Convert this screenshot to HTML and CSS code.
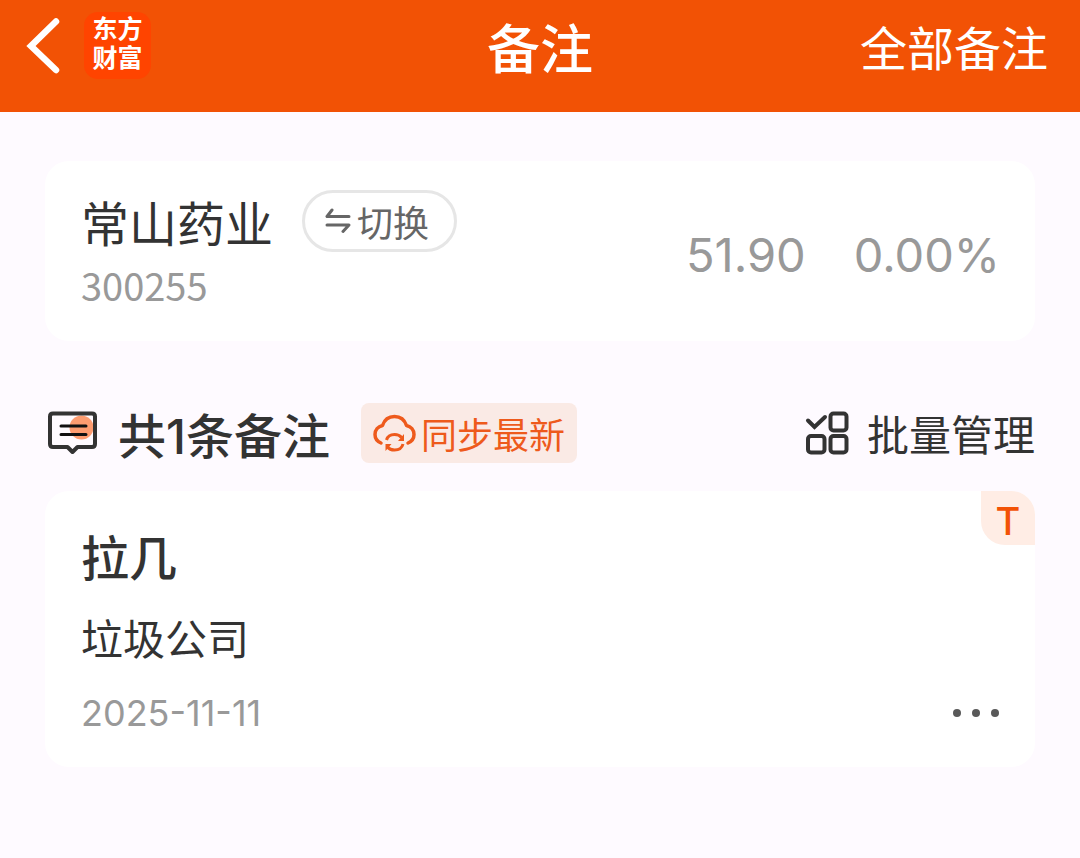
FILE: index.html
```html
<!DOCTYPE html>
<html lang="zh-CN">
<head>
<meta charset="utf-8">
<meta name="viewport" content="width=device-width, initial-scale=1">
<title>备注</title>
<link rel="stylesheet" href="styles.css">
</head>
<body>
<header class="topbar">
  <div class="topbar-left">
    <button class="back" type="button" aria-label="返回">
      <svg width="36" height="56" viewBox="0 0 36 56" fill="none" stroke="#fff" stroke-width="6.500" stroke-linecap="round" stroke-linejoin="miter"><path d="M32 3.500 7 28 32 52"/></svg>
    </button>
    <div class="logo">东方<br>财富</div>
  </div>
  <h1 class="title">备注</h1>
  <a class="all-notes" href="#">全部备注</a>
</header>
<main class="page">
  <section class="card stock">
    <div class="stock-info">
      <div class="stock-head">
        <h2 class="stock-name">常山药业</h2>
        <button class="switch" type="button">
          <svg width="26" height="26" viewBox="0 0 26 26" fill="none" stroke="#666" stroke-width="3" stroke-linecap="round" stroke-linejoin="round"><path d="M7 2 2 8.500H24M2 17H24L18 23.500"/></svg>
          <span>切换</span>
        </button>
      </div>
      <div class="stock-code">300255</div>
    </div>
    <div class="quote"><span>51.90</span><span>0.00%</span></div>
  </section>
  <div class="toolbar">
    <svg class="note-icon" width="50" height="44" viewBox="0 0 50 44" fill="none"><circle cx="33.500" cy="16.500" r="12" fill="#fd9c70"/><path d="M5 2.500H44Q47 2.500 47 5.500V33Q47 36 44 36H29.500L24.500 41 19.500 36H5Q2 36 2 33V5.500Q2 2.500 5 2.500Z" stroke="#333" stroke-width="4" stroke-linejoin="round"/><path d="M13 15H38M13 23.500H38" stroke="#111" stroke-width="3" stroke-linecap="round"/></svg>
    <h2 class="count">共<span class="num">1</span>条备注</h2>
    <button class="sync" type="button">
      <svg width="44" height="40" viewBox="0 0 44 40" fill="none" stroke="#ee5a1c" stroke-width="3.500" stroke-linecap="round" stroke-linejoin="round"><path d="M8 30C4.500 28.500 2 25 2 21.500C2 17 5 13.500 9.500 12.500C11.500 6.500 16 3.500 21.500 3.500S31.500 6.500 33.500 12.500C38 13.500 41 17 41 21.500C41 25 38.500 28.500 35 30"/><path stroke-width="3" stroke-linecap="butt" d="M13.500 27C14.500 23.500 17.500 21.500 21.500 21.500C24.500 21.500 27 22.500 28.500 24.500M30 31C29 35 25.500 37 21.500 37C18.500 37 16 36 14.500 34"/><path fill="#ee5a1c" stroke="none" d="M31 21V28H25ZM12.500 38V31H18.500Z"/></svg>
      <span>同步最新</span>
    </button>
    <button class="manage" type="button">
      <svg width="44" height="44" viewBox="0 0 44 44" fill="none" stroke="#333" stroke-width="4"><rect x="25.500" y="2.500" width="16" height="17" rx="3"/><rect x="3" y="25" width="16.500" height="16.500" rx="3"/><rect x="25.500" y="25" width="16" height="16.500" rx="3"/><path d="M3 9.500 9.500 16 20 6" stroke-linecap="round"/></svg>
      <span>批量管理</span>
    </button>
  </div>
  <article class="card note">
    <span class="tag">T</span>
    <h3 class="note-title">拉几</h3>
    <p class="note-body">垃圾公司</p>
    <div class="note-foot">
      <time datetime="2025-11-11">2025-11-11</time>
      <button class="more" type="button" aria-label="更多">
        <svg width="46" height="8" viewBox="0 0 46 8" fill="#595959"><circle cx="4" cy="4" r="4"/><circle cx="23" cy="4" r="4"/><circle cx="42" cy="4" r="4"/></svg>
      </button>
    </div>
  </article>
</main>
</body>
</html>
```
FILE: styles.css
```css
* { box-sizing: border-box; }
body {
  margin: 0;
  min-height: 100vh;
  background: #fefaff;
  color: #333;
  font-family: "Noto Sans CJK SC", sans-serif;
}
h1, h2, h3, p { margin: 0; }
button {
  padding: 0;
  border: 0;
  background: none;
  color: inherit;
  font: inherit;
  cursor: pointer;
}
svg { display: block; flex: none; }
.topbar {
  display: grid;
  grid-template-columns: 1fr auto 1fr;
  align-items: center;
  padding: 12px 32px 33px 24px;
  background: #f25205;
  color: #fff;
}
.topbar-left { display: flex; align-items: center; gap: 24px; }
.logo {
  width: 67px;
  height: 67px;
  padding-top: 3px;
  border-radius: 14px;
  background: #ff4400;
  font-family: "Liberation Sans", "Noto Sans CJK SC", sans-serif;
  font-size: 25px;
  font-weight: 700;
  line-height: 29px;
  text-align: center;
}
.title { padding-left: 8px; font-size: 53px; font-weight: 500; line-height: 64px; }
.all-notes {
  justify-self: end;
  color: #fff;
  font-size: 47px;
  line-height: 64px;
  text-decoration: none;
}
.page { padding: 49px 45px; }
.card { border-radius: 24px; background: #fff; }
.stock {
  display: flex;
  align-items: center;
  justify-content: space-between;
  padding: 28px 35px 28px 36px;
}
.stock-head { display: flex; align-items: center; gap: 29px; }
.stock-name { font-size: 48px; font-weight: 400; line-height: 64px; }
.switch {
  display: flex;
  align-items: center;
  gap: 6px;
  height: 62px;
  padding: 0 25px 0 20px;
  border: 3px solid #e6e6e6;
  border-radius: 31px;
  color: #666;
  font-size: 36px;
  line-height: 48px;
}
.stock-code { padding-top: 4px; color: #999; font-size: 38px; line-height: 56px; }
.quote {
  display: flex;
  gap: 48px;
  padding-top: 8px;
  color: #999;
  font-family: Inter, sans-serif;
  font-size: 47px;
  line-height: 64px;
}
.toolbar { display: flex; align-items: center; margin-top: 62px; padding-left: 3px; }
.count { margin-left: 20px; font-size: 48px; font-weight: 500; line-height: 60px; }
.num { font-family: Inter, sans-serif; line-height: 1; }
.sync {
  display: flex;
  align-items: center;
  gap: 4px;
  height: 60px;
  margin-left: 31px;
  padding: 0 12px;
  border-radius: 8px;
  background: #faeae5;
  color: #ee5a1c;
  font-size: 36px;
  line-height: 48px;
}
.manage {
  display: flex;
  align-items: center;
  gap: 18px;
  margin-left: auto;
  font-size: 42px;
  line-height: 60px;
}
.note { position: relative; margin-top: 28px; padding: 32px 36px 24px; }
.tag {
  position: absolute;
  top: 0;
  right: 0;
  width: 54px;
  height: 54px;
  border-radius: 0 24px 0 24px;
  background: #ffede5;
  color: #f25205;
  font-family: Inter, sans-serif;
  font-size: 38px;
  font-weight: 500;
  line-height: 60px;
  text-align: center;
}
.note-title { font-size: 48px; font-weight: 500; line-height: 64px; }
.note-body { margin-top: 20px; font-size: 42px; line-height: 60px; }
.note-foot {
  display: flex;
  align-items: center;
  justify-content: space-between;
  margin-top: 16px;
  color: #999;
  font-family: Inter, sans-serif;
  font-size: 36px;
  line-height: 60px;
}
```
